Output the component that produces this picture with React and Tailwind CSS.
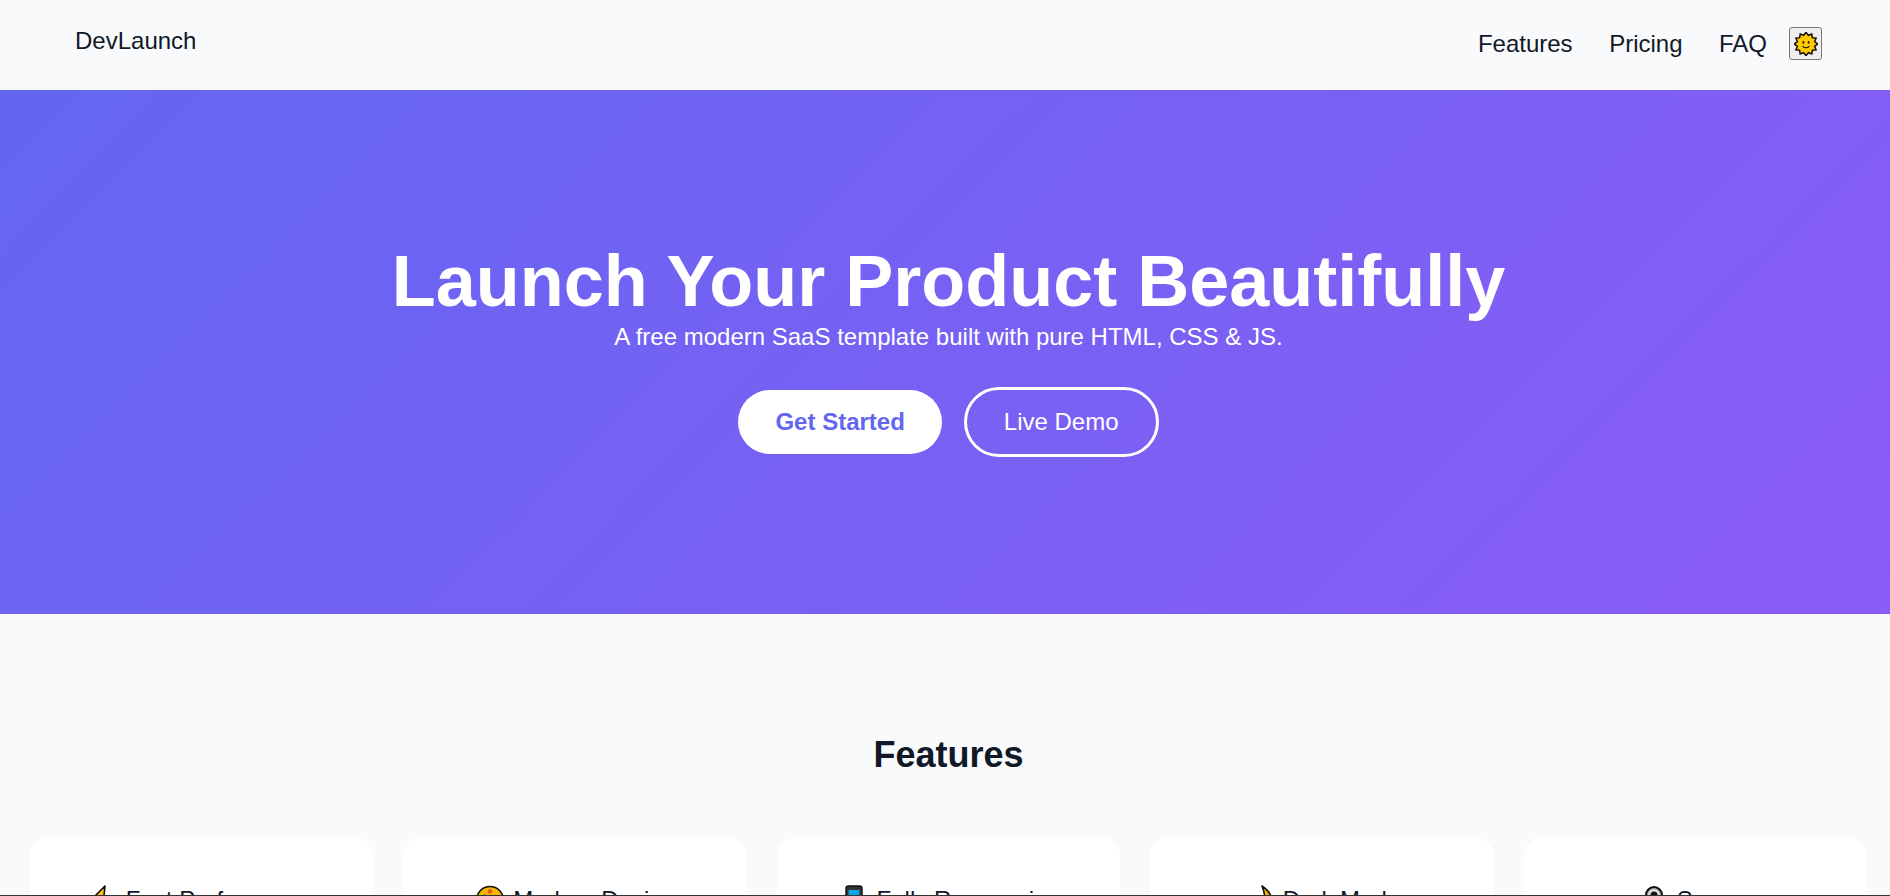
import React from 'react';

function SunIcon() {
  const pts = [];
  for (let i = 0; i < 24; i++) {
    const r = i % 2 === 0 ? 11.6 : 9;
    const a = (i / 24) * Math.PI * 2 - Math.PI / 2;
    pts.push(`${(12 + r * Math.cos(a)).toFixed(2)},${(12 + r * Math.sin(a)).toFixed(2)}`);
  }
  return (
    <svg width="24" height="24" viewBox="0 0 24 24">
      <polygon points={pts.join(' ')} fill="#ffc800" stroke="#111" strokeWidth="1.5" strokeLinejoin="miter" />
      <ellipse cx="9.4" cy="10.4" rx="0.9" ry="1.3" fill="#111" />
      <ellipse cx="14.6" cy="10.4" rx="0.9" ry="1.3" fill="#111" />
      <path d="M8.8 14.4c1.7 1.8 4.7 1.8 6.4 0" fill="none" stroke="#111" strokeWidth="1.1" strokeLinecap="round" />
    </svg>
  );
}

function BoltIcon() {
  return (
    <svg width="32" height="32" viewBox="0 0 32 32">
      <path d="M18 2 3 17h9l-3 13 17-18h-9l1-10z" fill="#fcc21b" stroke="#111" strokeWidth="1.6" strokeLinejoin="round" />
    </svg>
  );
}

function PaletteIcon() {
  return (
    <svg width="32" height="32" viewBox="0 0 32 32">
      <circle cx="16" cy="16" r="13.5" fill="#f5b700" stroke="#111" strokeWidth="1.6" />
      <circle cx="16" cy="7.5" r="2.2" fill="#e8502e" />
      <circle cx="10" cy="12.5" r="2.2" fill="#3fa648" />
      <circle cx="23" cy="14" r="2.2" fill="#2b8fd8" />
    </svg>
  );
}

function PhoneIcon() {
  return (
    <svg width="32" height="32" viewBox="0 0 32 32">
      <rect x="8" y="2" width="16" height="28" rx="2.5" fill="#333" stroke="#111" strokeWidth="1.4" />
      <rect x="10.5" y="6" width="11" height="19" fill="#0ea5e9" />
    </svg>
  );
}

function MoonIcon() {
  return (
    <svg width="32" height="32" viewBox="0 0 32 32">
      <path d="M18 2c6 4 10 10 10 16 0 7-6 12-14 12-3 0-6-1-8-3 6 1 12-1 14-7 2-6 0-13-2-18z" fill="#f5b700" stroke="#111" strokeWidth="1.6" strokeLinejoin="round" />
    </svg>
  );
}

function LockIcon() {
  return (
    <svg width="32" height="32" viewBox="0 0 32 32">
      <path d="M7 16V11a9 9 0 0 1 18 0v5" fill="#111" />
      <path d="M9.5 16V11a6.5 6.5 0 0 1 13 0v5" fill="#ddd" stroke="#999" strokeWidth="1" />
      <path d="M12.5 16v-5a3.5 3.5 0 0 1 7 0v5z" fill="#111" />
      <rect x="5" y="15" width="22" height="15" rx="2" fill="#fcc21b" stroke="#111" strokeWidth="1.4" />
    </svg>
  );
}

const features = [
  { icon: <BoltIcon />, title: 'Fast Performance' },
  { icon: <PaletteIcon />, title: 'Modern Design' },
  { icon: <PhoneIcon />, title: 'Fully Responsive' },
  { icon: <MoonIcon />, title: 'Dark Mode' },
  { icon: <LockIcon />, title: 'Secure' },
];

export default function App() {
  return (
    <div className="h-[896px] overflow-hidden border-b border-[#333] bg-[#f9fafb] font-['Liberation_Sans',Arial,sans-serif] text-[#111827]">
      <div className="w-[1897px]">
        <nav className="flex h-[90px] items-start justify-between px-[75px]">
          <div className="pt-[27px] text-2xl leading-[28px]">DevLaunch</div>
          <div className="flex items-center pt-[27px]">
            <a className="text-2xl">Features</a>
            <a className="ml-[36.5px] text-2xl">Pricing</a>
            <a className="ml-[36.5px] text-2xl">FAQ</a>
            <button className="ml-[22px] flex h-[33px] w-[33px] items-center justify-center rounded-[3px] border border-[#767676] bg-[#efefef]">
              <SunIcon />
            </button>
          </div>
        </nav>

        <section className="flex h-[524px] flex-col items-center justify-center bg-[linear-gradient(135deg,#6366f1,#8b5cf6)] pb-[8px] text-white">
          <h1 className="text-[72px] font-bold leading-[83px]">Launch Your Product Beautifully</h1>
          <p className="text-2xl leading-[28px]">A free modern SaaS template built with pure HTML, CSS &amp; JS.</p>
          <div className="mt-[36px] flex items-center gap-[22px]">
            <a className="rounded-[32px] bg-white px-[37px] py-[18px] text-2xl font-bold leading-[28px] text-[#6366f1]">Get Started</a>
            <a className="rounded-[35px] border-[3px] border-white px-[37px] py-[18px] text-2xl leading-[28px]">Live Demo</a>
          </div>
        </section>

        <section className="px-[30px] pt-[120px]">
          <h2 className="text-center text-4xl font-bold leading-[41px]">Features</h2>
          <div className="mt-[62px] grid grid-cols-5 gap-[30px]">
            {features.map((f) => (
              <div key={f.title} className="rounded-[20px] bg-white px-[30px] pb-[40px] pt-[47px]">
                <h3 className="flex items-center justify-center gap-[7px] text-2xl leading-[28px]">
                  {f.icon}
                  {f.title}
                </h3>
              </div>
            ))}
          </div>
        </section>
      </div>
    </div>
  );
}
